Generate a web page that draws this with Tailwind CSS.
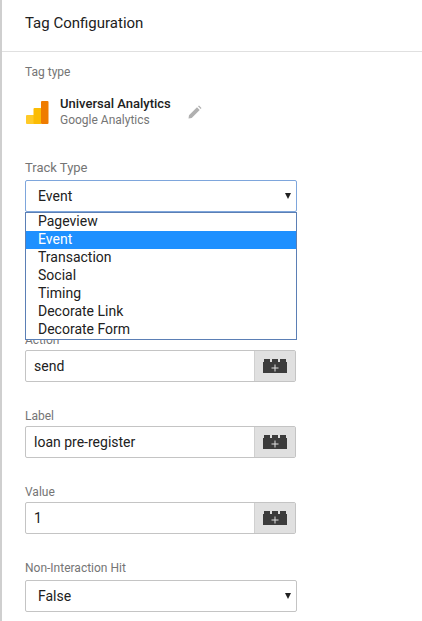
<!DOCTYPE html>
<html lang="en">
<head>
  <meta charset="UTF-8">
  <title>Tag Configuration</title>
  <script src="https://cdn.jsdelivr.net/npm/@tailwindcss/browser@4"></script>
</head>
<body class="bg-white font-['Roboto',sans-serif] text-[#212121]">
  <div class="h-[621px] overflow-hidden border-l-2 border-[#cfcfcf]">
    <!-- Header -->
    <div class="h-[52px] border-b border-[#e0e0e0] pl-[23px] pt-[14px] text-[15px] leading-[18px]">Tag Configuration</div>

    <div class="pl-[23px]">
      <p class="mt-[13px] text-[12px] leading-[14px] text-[#757575]">Tag type</p>

      <!-- Tag type -->
      <div class="mt-[16px] flex h-[34px] items-center">
        <svg class="ml-[1px] h-[23px] w-[23px]" viewBox="0 0 23 23">
          <rect x="0" y="14" width="11" height="9" rx="1" fill="#ffca28"/>
          <rect x="7.500" y="7" width="8" height="16" rx="1" fill="#fbbc04"/>
          <rect x="15" y="0" width="7.500" height="23" rx="1" fill="#ef7c00"/>
        </svg>
        <div class="ml-[11px] w-[128px]">
          <p class="text-[13px] leading-[16px] font-medium text-[#212121]">Universal Analytics</p>
          <p class="text-[12px] leading-[16px] text-[#757575]">Google Analytics</p>
        </div>
        <svg class="h-[14px] w-[14px]" viewBox="0 0 14 14">
          <path d="M0.500 13.500 L1 10.300 L9 2.300 L11.700 5 L3.700 13 Z M10 1.300 L11 0.500 L13.500 3 L12.700 4 Z" fill="#b0b0b0"/>
        </svg>
      </div>

      <!-- Track type -->
      <p class="mt-[32px] text-[13px] leading-[14px] text-[#757575]">Track Type</p>
      <div class="relative mt-[5px] w-[272px]">
        <div class="flex h-[32px] items-center justify-between rounded-[2px] border border-[#7ea6dc] pl-[12px] pr-[5px] text-[14px]">
          <span>Event</span>
          <span class="h-0 w-0 border-x-[3.5px] border-t-[6px] border-x-transparent border-t-[#212121]"></span>
        </div>
        <ul class="absolute top-[32px] left-0 z-10 h-[128px] w-full border border-[#5b7fb5] bg-white text-[14px] leading-[16px]">
          <li class="pb-[2px] pl-[12px]">Pageview</li>
          <li class="bg-[#1e90ff] pb-[2px] pl-[12px] text-white">Event</li>
          <li class="pb-[2px] pl-[12px]">Transaction</li>
          <li class="pb-[2px] pl-[12px]">Social</li>
          <li class="pb-[2px] pl-[12px]">Timing</li>
          <li class="pb-[2px] pl-[12px]">Decorate Link</li>
          <li class="pb-[2px] pl-[12px]">Decorate Form</li>
        </ul>
      </div>

      <!-- Action -->
      <p class="mt-[121px] text-[12px] leading-[14px] text-[#757575]">Action</p>
      <div class="mt-[3px] flex h-[32px] w-[271px] rounded-[2px] border border-[#c4c4c4]">
        <span class="flex-1 pl-[8px] text-[14px] leading-[30px]">send</span>
        <span class="flex w-[41px] items-center justify-center border-l border-[#d0d0d0] bg-[#e0e0e0]">
          <svg class="h-[14px] w-[24px]" viewBox="0 0 24 14"><path d="M0 3h1V0h6v3h2V0h6v3h2V0h6v3h1v11H0Z" fill="#3c3c3c"/><path d="M11.500 5.500h1v3h3v1h-3v3h-1v-3h-3v-1h3Z" fill="#e0e0e0"/></svg>
        </span>
      </div>

      <!-- Label -->
      <p class="mt-[27px] text-[12px] leading-[14px] text-[#757575]">Label</p>
      <div class="mt-[3px] flex h-[32px] w-[271px] rounded-[2px] border border-[#c4c4c4]">
        <span class="flex-1 pl-[8px] text-[14px] leading-[30px]">loan pre-register</span>
        <span class="flex w-[41px] items-center justify-center border-l border-[#d0d0d0] bg-[#e0e0e0]">
          <svg class="h-[14px] w-[24px]" viewBox="0 0 24 14"><path d="M0 3h1V0h6v3h2V0h6v3h2V0h6v3h1v11H0Z" fill="#3c3c3c"/><path d="M11.500 5.500h1v3h3v1h-3v3h-1v-3h-3v-1h3Z" fill="#e0e0e0"/></svg>
        </span>
      </div>

      <!-- Value -->
      <p class="mt-[27px] text-[12px] leading-[14px] text-[#757575]">Value</p>
      <div class="mt-[3px] flex h-[32px] w-[271px] rounded-[2px] border border-[#c4c4c4]">
        <span class="flex-1 pl-[8px] text-[14px] leading-[30px]">1</span>
        <span class="flex w-[41px] items-center justify-center border-l border-[#d0d0d0] bg-[#e0e0e0]">
          <svg class="h-[14px] w-[24px]" viewBox="0 0 24 14"><path d="M0 3h1V0h6v3h2V0h6v3h2V0h6v3h1v11H0Z" fill="#3c3c3c"/><path d="M11.500 5.500h1v3h3v1h-3v3h-1v-3h-3v-1h3Z" fill="#e0e0e0"/></svg>
        </span>
      </div>

      <!-- Non-Interaction Hit -->
      <p class="mt-[27px] text-[12px] leading-[14px] text-[#757575]">Non-Interaction Hit</p>
      <div class="mt-[5px] flex h-[32px] w-[272px] items-center justify-between rounded-[2px] border border-[#c4c4c4] pl-[12px] pr-[5px] text-[14px]">
        <span>False</span>
        <span class="h-0 w-0 border-x-[3.5px] border-t-[6px] border-x-transparent border-t-[#212121]"></span>
      </div>
    </div>
  </div>
</body>
</html>
